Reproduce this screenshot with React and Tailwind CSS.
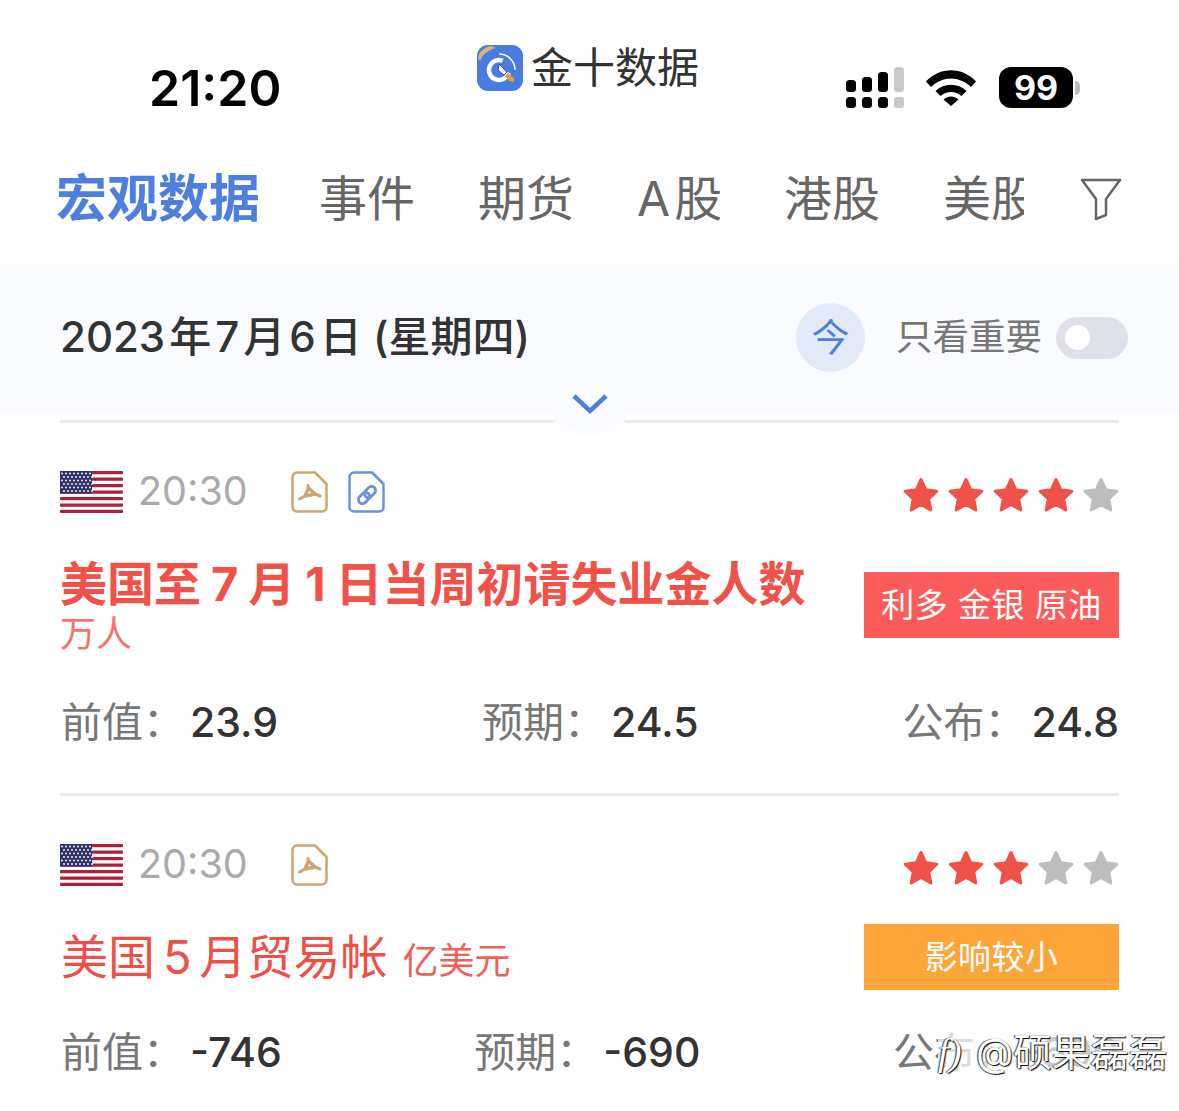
import { Fragment } from "react";

const FONT = "font-['Inter','Noto_Sans_CJK_SC',sans-serif]";

const tabs = [
  { label: "事件", cls: "w-[96px] ml-[59px]" },
  { label: "期货", cls: "w-[96px] ml-[63px]" },
  { label: <Fragment>A<span className="ml-[4px]">股</span></Fragment>, cls: "w-[83px] ml-[63px]" },
  { label: "港股", cls: "w-[96px] ml-[64px]" },
  { label: "美股", cls: "w-[81px] ml-[63px]" },
];

const Logo = () => (
  <svg width="46" height="46" viewBox="0 0 46 46" className="shrink-0">
    <rect width="46" height="46" rx="11" fill="#4a7be0" />
    <path d="M1 13 C2 7 7 2 14 1 L19 3 C11 5 6 9 3 16 Z" fill="#d9b27a" />
    <circle cx="22" cy="25" r="10" fill="none" stroke="#fff" strokeWidth="4.500" strokeDasharray="48 15" transform="rotate(15 22 25)" />
    <path d="M22 9 A16 16 0 0 1 38 25" fill="none" stroke="#fff" strokeWidth="1.500" />
    <path d="M22 19 L30 27 L27 30 L21 25 Z" fill="#fff" stroke="#33509c" strokeWidth="1" />
    <path d="M28 31 L31 28 L37 33 L37 37 L32 36 Z" fill="#e79a3a" />
  </svg>
);

const Signal = () => (
  <svg width="60" height="42" viewBox="0 0 60 42" className="shrink-0">
    <g fill="#000">
      <rect x="1" y="13" width="10" height="12" rx="3.500" />
      <rect x="17" y="10" width="10" height="15" rx="3.500" />
      <rect x="33" y="5" width="10" height="20" rx="3.500" />
      <rect x="1" y="30" width="10" height="11" rx="3.500" />
      <rect x="17" y="30" width="10" height="11" rx="3.500" />
      <rect x="33" y="30" width="10" height="11" rx="3.500" />
    </g>
    <rect x="49" y="0" width="10" height="25" rx="3.500" fill="#c9c9c9" />
    <rect x="49" y="30" width="10" height="11" rx="3" fill="#c9c9c9" />
  </svg>
);

const Wifi = () => (
  <svg width="50" height="38" viewBox="0 0 50 38" className="shrink-0">
    <path d="M0 13.500 C14 -1.500 36 -1.500 50 13.500 L45 19 C33 7.500 17 7.500 5 19 Z" fill="#000" />
    <path d="M9.500 23 C18 14.500 32 14.500 40.500 23 L35.500 28 C29 22.500 21 22.500 14.500 28 Z" fill="#000" />
    <path d="M17.500 31.500 C22 27.500 28 27.500 32.500 31.500 L25 38 Z" fill="#000" />
  </svg>
);

const Star = ({ on }) => (
  <svg width="36" height="36" viewBox="0 0 36 36" className="shrink-0">
    <path
      d="M18 2.500 L22.800 12.800 L33.800 14.200 L25.700 21.800 L27.800 33 L18 27.500 L8.200 33 L10.300 21.800 L2.200 14.200 L13.200 12.800 Z"
      fill={on ? "#f0524a" : "#bdbdbd"}
      stroke={on ? "#f0524a" : "#bdbdbd"}
      strokeWidth="3"
      strokeLinejoin="round"
    />
  </svg>
);

const Flag = () => (
  <svg width="63" height="42" viewBox="0 0 63 42" className="shrink-0">
    <rect width="63" height="42" rx="2" fill="#fff" />
    {[0, 6.500, 13, 19.500, 26, 32.500, 38.800].map((y) => (
      <rect key={y} y={y} width="63" height="3.200" rx="1" fill="#ab2239" />
    ))}
    <rect width="32" height="22.500" fill="#2f3168" />
    {[2.500, 6, 9.500, 13, 16.500, 20].map((y, r) =>
      [2, 6, 10, 14, 18, 22, 26, 30].map((x) => (
        <circle key={`${x}-${y}`} cx={x + (r % 2) * 2} cy={y} r="1" fill="#f0f0f6" />
      ))
    )}
  </svg>
);

const DocIcon = ({ color, children }) => (
  <svg width="37" height="42" viewBox="0 0 37 42" fill="none" className="shrink-0">
    <path
      d="M6 1.500 H24 L35.500 13 V36 A4.500 4.500 0 0 1 31 40.500 H6 A4.500 4.500 0 0 1 1.500 36 V6 A4.500 4.500 0 0 1 6 1.500 Z"
      stroke={color}
      strokeWidth="2.500"
      strokeLinejoin="round"
    />
    {children}
  </svg>
);

const PdfIcon = () => (
  <DocIcon color="#cfa571">
    <path d="M17.500 17 L14 25 L24 23 Z" stroke="#cfa571" strokeWidth="3.400" strokeLinejoin="round" />
    <path d="M17 14.500 L17.500 18 M14 25 L8.500 28 M24 23 L29 25" stroke="#cfa571" strokeWidth="3" strokeLinecap="round" />
  </DocIcon>
);

const LinkIcon = () => (
  <DocIcon color="#6c91e2">
    <g transform="rotate(-45 19 24)" stroke="#6c91e2" strokeWidth="2.800">
      <rect x="8.500" y="20" width="12.500" height="8" rx="4" />
      <rect x="17" y="20" width="12.500" height="8" rx="4" />
    </g>
  </DocIcon>
);

const Value = ({ label, value }) => (
  <div className="flex items-center">
    <span className="text-[41px] leading-none text-[#777]">{label}</span>
    <span className="ml-[6px] text-[41px] leading-none font-medium text-[#333]">{value}</span>
  </div>
);

const EventCard = ({ stars, icons, title, values, border }) => (
  <div className={border ? "border-b-[3px] border-[#ececee]" : ""}>
    <div className="flex items-center h-[42px]">
      <Flag />
      <span className="ml-[15px] w-[153px] text-[39.500px] leading-none text-[#aaa]">20:30</span>
      <div className="flex gap-[20px]">{icons}</div>
      <div className="ml-auto flex gap-[9px] mt-[6px]">
        {[0, 1, 2, 3, 4].map((i) => (
          <Star key={i} on={i < stars} />
        ))}
      </div>
    </div>
    {title}
    {values}
  </div>
);

export default function App() {
  return (
    <div className={`relative w-[1179px] h-[1111px] overflow-hidden bg-white ${FONT}`}>
      {/* status bar */}
      <div className="flex h-[132px]">
        <div className="w-[149px]" />
        <div className="w-[328px] pt-[61px] text-[50px] leading-[55px] font-semibold text-black">21:20</div>
        <div className="flex items-center h-[46px] mt-[45px] gap-[8px]">
          <Logo />
          <span className="text-[42px] leading-none text-[#333]">金十数据</span>
        </div>
        <div className="flex items-start ml-[146px] mt-[67px]">
          <Signal />
          <div className="ml-[21px] mt-[1px]"><Wifi /></div>
          <div className="ml-[23px] flex items-center h-[41px]">
            <div className="flex items-center justify-center w-[74px] h-[41px] rounded-[12px] bg-black text-[34px] leading-none font-bold text-white">99</div>
            <div className="ml-[2px] w-[5px] h-[14px] rounded-r-full bg-[#bbb]" />
          </div>
        </div>
      </div>

      {/* tabs */}
      <div className="flex items-center h-[132px] pl-[56px] pt-[1px]">
        <span className="text-[51px] leading-none font-bold text-[#4f7fdc] whitespace-nowrap">宏观数据</span>
        {tabs.map((t, i) => (
          <div key={i} className={`overflow-hidden whitespace-nowrap text-[48px] leading-none text-[#666] ${t.cls}`}>
            {t.label}
          </div>
        ))}
        <svg width="42" height="44" viewBox="0 0 42 44" fill="none" className="ml-[56px] shrink-0">
          <path d="M2 3 H40 L26 22 V38 L16 42 V22 Z" stroke="#666" strokeWidth="2.500" strokeLinejoin="round" />
        </svg>
      </div>

      {/* date bar */}
      <div className="relative flex items-center h-[149px] pb-[3px] pl-[60px] pr-[51px] bg-[#f9fbfe]">
        <span className="text-[42px] leading-none font-medium text-[#333]">
          2023<span className="mx-[4px]">年</span>7<span className="mx-[4px]">月</span>6<span className="ml-[4px]">日</span> (星期四)
        </span>
        <div className="ml-auto flex items-center justify-center w-[69px] h-[69px] rounded-full bg-[#e3ebfb] text-[38px] leading-none text-[#4f7fdc]">今</div>
        <span className="ml-[31px] text-[36.500px] leading-none text-[#777]">只看重要</span>
        <div className="ml-[14px] mt-[1px] flex items-center w-[72px] h-[42px] pl-[9px] rounded-full bg-[#dfe0ea]">
          <div className="w-[25px] h-[25px] rounded-full bg-white" />
        </div>
      </div>

      {/* list */}
      <div className="relative mx-[60px] pt-[7px]">
        <div className="h-[3px] bg-[#ececee]" />
        <div className="absolute left-[495px] top-0 w-[70px] h-[22px] bg-[#f9fbfe] [clip-path:polygon(0_0,100%_0,100%_45%,58%_100%,42%_100%,0_45%)]" />
        <svg width="36" height="22" viewBox="0 0 36 22" fill="none" className="absolute left-[512px] -top-[20px]">
          <path d="M2 3 L18 18 L34 3" stroke="#4f7fdc" strokeWidth="4.500" />
        </svg>

        <div className="pt-[48px]">
          <EventCard
            stars={4}
            border
            icons={
              <Fragment>
                <PdfIcon />
                <LinkIcon />
              </Fragment>
            }
            title={
              <div className="flex items-start justify-between h-[146px] pt-[45px]">
                <div>
                  <div className="text-[47px] leading-[52px] font-bold text-[#f0524a] whitespace-nowrap">
                    美国至<span className="mx-[10px]">7</span>月<span className="mx-[10px]">1</span>日当周初请失业金人数
                  </div>
                  <div className="mt-[3px] text-[36px] leading-[42px] text-[#f4736c]">万人</div>
                </div>
                <div className="flex items-center justify-center w-[255px] h-[66px] mt-[14px] bg-[#fb5b5a] text-[33px] leading-none tracking-[0.5px] text-white whitespace-nowrap">利多 金银 原油</div>
              </div>
            }
            values={
              <div className="flex justify-between pt-[43px] pb-[50px] pl-px">
                <Value label="前值：" value="23.9" />
                <Value label="预期：" value="24.5" />
                <Value label="公布：" value="24.8" />
              </div>
            }
          />

          <div className="pt-[48px]">
            <EventCard
              stars={3}
              icons={<PdfIcon />}
              title={
                <div className="flex items-start justify-between h-[146px] pt-[38px]">
                  <div className="flex items-baseline pt-[7px] pl-px whitespace-nowrap">
                    <span className="text-[47px] leading-[52px] font-normal text-[#ef4f47]">
                      美国<span className="mx-[8px]">5</span>月贸易帐
                    </span>
                    <span className="ml-[15px] text-[36px] leading-none text-[#f0605a]">亿美元</span>
                  </div>
                  <div className="flex items-center justify-center w-[255px] h-[66px] bg-[#fea53a] text-[33px] leading-none tracking-[0.5px] text-white">影响较小</div>
                </div>
              }
              values={
                <div className="flex justify-between pl-px">
                  <Value label="前值：" value="-746" />
                  <Value label="预期：" value="-690" />
                  <Value label="公布：" value="-690" />
                </div>
              }
            />
          </div>
        </div>
      </div>

      {/* watermark */}
      <div className="absolute left-[938px] top-[1030px] flex items-center text-[38.500px] leading-[44px] text-white whitespace-nowrap bg-white/75 [text-shadow:1px_1px_1px_#000,-1px_0_1px_#333]">
        <span className="italic w-[38px] font-['Liberation_Serif',serif]">f)</span>
        <span>@硕果磊磊</span>
      </div>
    </div>
  );
}
